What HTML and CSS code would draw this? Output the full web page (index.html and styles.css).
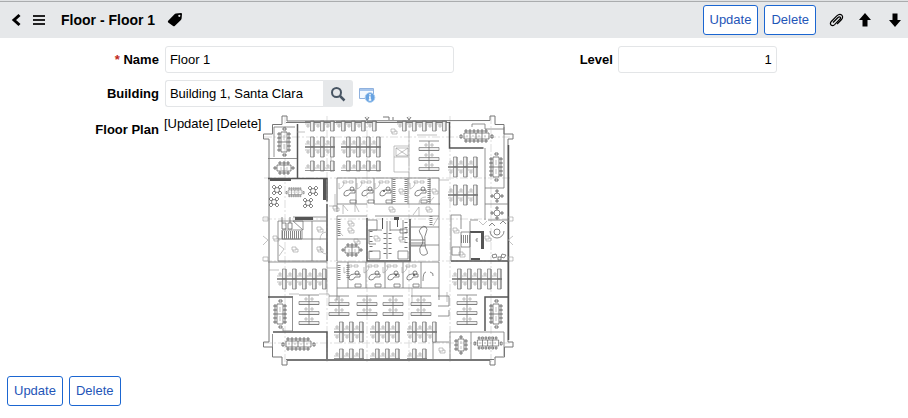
FILE: index.html
```html
<!DOCTYPE html>
<html lang="en">
<head>
<meta charset="utf-8">
<title>Floor - Floor 1</title>
<link rel="stylesheet" href="styles.css">
</head>
<body>
<form class="record">
<header class="toolbar">
  <button type="button" class="icon" aria-label="Back"><svg width="10" height="14" viewBox="0 0 10 14"><path d="M8.500 2 3 7l5.500 5" fill="none" stroke="currentColor" stroke-width="3"/></svg></button>
  <button type="button" class="icon menu" aria-label="Menu"><svg width="12" height="12" viewBox="0 0 12 12"><path d="M0 2h12M0 6h12M0 10h12" stroke="currentColor" stroke-width="2"/></svg></button>
  <h1>Floor - Floor 1</h1>
  <button type="button" class="icon" aria-label="Tag"><svg width="16" height="16" viewBox="0 0 16 16"><path fill="currentColor" fill-rule="evenodd" d="M7.500 2.300q.6-.6 1.500-.7L14 1q1 0 1 1l-.4 4.500q-.1.900-.7 1.500l-6.200 6q-.8.700-1.600 0L1.200 10.500q-.8-.9 0-1.700zM12.300 2.700a1.100 1.100 0 1 0 .01 0z"/></svg></button>
  <div class="actions">
    <button type="button" class="btn">Update</button>
    <button type="button" class="btn">Delete</button>
    <button type="button" class="icon clip" aria-label="Attachments"><svg width="16" height="16" viewBox="0 0 16 16"><path d="m5 10.500 5-5q1.500-1.200 2.200-.3.800 1-.3 2l-5.300 5.400q-2 1.800-3.500.4-1.500-1.600.2-3.500l5.500-5.600q2.800-2.700 5-.8 1.900 2.200-.7 4.900l-4 4" fill="none" stroke="currentColor" stroke-width="1.200"/></svg></button>
    <button type="button" class="icon" aria-label="Previous record"><svg width="14" height="16" viewBox="0 0 14 16"><path fill="currentColor" d="M7 1 1 8h3.500v6.500h5V8H13z"/></svg></button>
    <button type="button" class="icon" aria-label="Next record"><svg width="14" height="16" viewBox="0 0 14 16"><path fill="currentColor" d="M7 15 1 8h3.500V1.500h5V8H13z"/></svg></button>
  </div>
</header>
<main>
  <div class="columns">
    <div class="field"><label for="name"><span class="req">*</span> Name</label><input id="name" type="text" value="Floor 1"></div>
    <div class="field short"><label for="level">Level</label><input id="level" type="text" value="1"></div>
    <div class="field"><label for="building">Building</label>
      <div class="lookup"><input id="building" type="text" value="Building 1, Santa Clara"><button type="button" class="search" aria-label="Look up building"><svg width="16" height="16" viewBox="0 0 16 16"><circle cx="6.500" cy="6.500" r="4.500" fill="none" stroke="currentColor" stroke-width="2"/><path d="m10 10 4.500 4.500" stroke="currentColor" stroke-width="2.500"/></svg></button>
      <button type="button" class="icon info" aria-label="Building details"><svg width="17" height="16" viewBox="0 0 17 16"><path d="M.5 1.500h14v10H.5z" fill="#f4f9ff" stroke="#8fb1de"/><path d="M1 2h13v2H1z" fill="#a8c6ec"/><circle cx="11" cy="10.500" r="4.800" fill="#68a3e2" stroke="#a9ccef"/><path d="M11 7v1.500m-1 1.500h1v3m-1.300 0h2.600" fill="none" stroke="#fff" stroke-width="1.400"/></svg></button></div></div>
  </div>
  <div class="plan-row">
    <span class="plan-label">Floor Plan</span>
    <div class="plan-links"><a href="#update">[Update]</a> <a href="#delete">[Delete]</a></div>
    <svg class="plan" width="254" height="254" viewBox="262 114 254 254" role="img" aria-label="Floor plan">
      <defs>
        <g id="u"><path class="d" d="M5.500 0h3.500v10H5.500z"/><path class="k" d="M0 9.500h10M9 0v10"/><path class="l" d="M0 7h5M2 4h2v2H2z"/></g>
        <g id="u3"><use href="#u"/><use href="#u" x="10"/><use href="#u" x="20"/></g>
        <g id="p3"><use href="#u3"/><use href="#u3" transform="translate(0 20) scale(1 -1)"/></g>
        <g id="p1"><use href="#u"/><use href="#u" transform="translate(0 20) scale(1 -1)"/></g>
        <g id="r"><path class="d" d="M0 6.500h20v3H0z"/><path class="k" d="M0 9.500h20M10 0v10"/><path class="l" d="M6 3h2v2H6zM12 3h2v2h-2z"/></g>
        <g id="r3"><path class="k" d="M0 0h20"/><use href="#r"/><use href="#r" y="10"/><use href="#r" y="20"/></g>
        <g id="r2"><path class="k" d="M0 0h20"/><use href="#r"/><use href="#r" y="10"/></g>
        <g id="v"><path class="c" d="M1 5h2v2H1zM1 9h2v2H1zM1 13h2v2H1zM1 17h2v2H1zM1 21h2v2H1zM11 5h2v2h-2zM11 9h2v2h-2zM11 13h2v2h-2zM11 17h2v2h-2zM11 21h2v2h-2zM6 0h3v2H6zM6 26h3v2H6z"/><path class="t" d="M4 4h6v20H4zM4 14h6"/><path class="l" d="M7 7v5M7 16v5"/></g>
        <g id="h"><path class="c" d="M5 1h2v2H5zM9 1h2v2H9zM13 1h2v2h-2zM17 1h2v2h-2zM21 1h2v2h-2zM25 1h2v2h-2zM5 11h2v2H5zM9 11h2v2H9zM13 11h2v2h-2zM17 11h2v2h-2zM21 11h2v2h-2zM25 11h2v2h-2zM0 6h2v3H0zM31 6h2v3h-2z"/><path class="t" d="M4 4h25v6H4zM10 4v6M16 4v6M22 4v6"/><path class="l" d="M7 6v2M13 6v2M19 6v2M25 6v2"/></g>
        <g id="s"><path class="c" d="M5 0h2v2H5zM9 0h2v2H9zM13 0h2v2h-2zM5 10h2v2H5zM9 10h2v2H9zM13 10h2v2h-2zM0 5h2v2H0zM18 5h2v2h-2z"/><path class="t" d="M3 3h14v6H3zM10 3v6"/><path class="l" d="M7 5v3M13 5v3"/></g>
        <g id="w"><path class="c" d="M0 4h2v2H0zM0 8h2v2H0zM0 12h2v2H0zM10 4h2v2h-2zM10 8h2v2h-2zM10 12h2v2h-2zM5 0h2v2H5zM5 16h2v2H5z"/><path class="t" d="M3 3h6v12H3z"/><path class="l" d="M6 5v3M6 10v3"/></g>
        <g id="q"><circle class="t" r="2.500"/><path class="t" d="m-5-3 2-2 2 2-2 2zM1-3l2-2 2 2-2 2zM-5 3l2-2 2 2-2 2zM1 3l2-2 2 2-2 2z"/></g>
        <g id="q4"><circle class="t" r="3"/><path class="c" d="M-1-6h2v2h-2zM-1 4h2v2h-2zM-6-1h2v2h-2zM4-1h2v2H4z"/></g>
        <g id="o"><path class="l" d="M1 3v6q5-2 5-7M5 1h4v2H5zM11 1h4v2h-4z"/><path class="t" d="M6 13q1-3 5-3h6v3h-5q-1 3-4 3t-2-3z"/><circle class="t" cx="14" cy="9" r="2"/><path class="k" d="M12 20h6v3h-6z"/></g>
        <g id="tag"><path class="l" d="M0 0h4v3H0zM1 3v2h5V2H4"/></g>
      </defs>
      <path class="grid" d="M286 116v248M328 116v248M368 116v248M410 116v248M451 116v248M492 116v248M265 137h248M265 178h248M265 219h248M265 261h248M265 343h248"/>
      <path class="wall" d="M288 121v-5h-5v8.500h-9.500v9.500h-9v5h5.500v203h-5.500v5h9v10h9.500v8h5v-4.500h203v4.500h5v-8h9.500v-10h8.500v-5h-5v-203h5v-5h-9v-9.500h-9v-8.500h-5v4.500zM366 117l2 3 2-3M408 117l2 3 2-3M384 117h6v3M394 117v3"/>
      <path class="heavy" d="M298.500 124v54M269 178.500h59v23M450.500 122v26h34M328 204v57M368 218v43h43v-42M452 261h57M274 332h54v27M486 331v-34h23M269 297h25M509.500 145v195"/>
      <path class="wall" d="M287 122.500h163M287 359.500h208"/>
      <path class="k" d="M269 158.500h29M275 127h21M275 127v30M293.500 297v34M284 331h10M284 328v4M273.500 334v22M451 360v-28h54v24M472 332v28M434 342h16M434 342v17M505 127v61h-19M486 148v72M486 204h23M489 220h20M294 217h34M338 178h102v26M338 204h30M338 178v26M357 178v26M375 178v26M393 178v26M409 178v26M431 178v26M375 204h66M338 216h30M338 216v45M338 239h30M376 216h64M440 204v57M411 227h29M411 245h29M279 221h49M279 221v40h49M313 221v40M279 239h49M452 215h10v14M452 215v46M471 221v40M471 220h8M338 262h102v26H338v-26M349 262v26M367 262v26M386 262v26M404 262v26M422 262v26M338 300v-12M269 262h59M338 212v-8M440 288v12M473 127v-3h13v5h19"/>
      <path class="l" d="M395 146h15v40M395 146v26h15M397 148h12v8h-12zl12 8m0-8-12 8M395 157h15M410 131v15M298 132h8M328 261v33M332 137v35M300 294h-10M320 294h10v12M418 135h20M440 180h10M336 194v12M330 206h8M413 288v15M448 292v10M280 270h-10M328 268h10M344 214v-9l5 6M356 212v-8l4 8M420 216v-9l-6 8M429 204l6-7M480 221l4 4 4-4M264 217h5v4h-5zM264 257h5v4h-5zM509 217h5v4h-5zM509 257h5v4h-5zM264 236l5 4-5 5M514 236l-5 4 5 5M280 245l5 4-5 7M328 232q-7 0-7 8M328 254q-7 0-7-8M440 216l-6 10M338 229l6 7M420 204q0-7 7-7"/>
      <path class="solid" d="M296 217h18v3h-18zM324 179h3v21h-3zM482 231h3v18h-3zM471 231h14v2h-14zM395 217h5v3h-5zM398 218h1v9h-1zM271 179h21v2h-21zM472 258h9v2h-9zM383 218h1v11h-1z"/>
      <path class="stairs" d="M283 235h20M462 239h9"/>
      <path class="hatch" d="M395 179v24M407 179v24M430 179v24M349 265v13M340 219v18M340 265v15M432 216v10"/>
      <path class="k" d="M283 230h20v9h-20zM294 221h10v9l-10-9M462 232h9v15h-9zM453 247h8v8h-8zM369 220h9v10h-9M383 230h-13v14h7M388 221v38M391 221v10M404 220v20M370 251h11v8h-11zM399 251h10v8h-10zM391 230h13M401 229h7v4h-7z"/>
      <path class="fix" d="M372 231v25M386 233v23M391 233v23M407 222v30"/>
      <g transform="translate(0 252) scale(1 -1)"><use href="#u3" x="306" y="121"/><use href="#u3" x="337" y="121"/><use href="#u" x="368" y="121"/><use href="#u3" x="398" y="121"/><use href="#u" x="428" y="121"/><use href="#u" x="438" y="121"/></g>
      <use href="#p3" x="306" y="137"/><use href="#p3" x="342" y="137"/><use href="#p1" x="372" y="137"/>
      <use href="#u3" x="306" y="161"/><use href="#u3" x="342" y="161"/><use href="#u" x="372" y="161"/>
      <use href="#r3" x="420" y="141"/><use href="#p3" x="449" y="157"/><use href="#p3" x="449" y="185"/>
      <use href="#p3" x="278" y="269"/><use href="#p1" x="308" y="269"/><use href="#p1" x="318" y="269"/>
      <use href="#p3" x="453" y="269"/><use href="#p1" x="483" y="269"/><use href="#p1" x="493" y="269"/>
      <use href="#r3" x="300" y="295"/><use href="#r3" x="458" y="295"/>
      <use href="#r2" x="330" y="296"/><use href="#r2" x="358" y="296"/><use href="#r2" x="384" y="296"/><use href="#r2" x="412" y="296"/><path class="k" d="M439 296h11v10h-11M439 316h11v-6"/>
      <use href="#p3" x="335" y="322"/><use href="#p3" x="371" y="322"/><use href="#p3" x="408" y="322"/>
      <use href="#u3" x="335" y="349"/><use href="#u3" x="371" y="349"/><use href="#u" x="408" y="349"/><use href="#u" x="418" y="349"/>
      <use href="#v" x="278" y="128"/><use href="#v" x="490" y="153"/><use href="#v" x="274" y="300"/><use href="#v" x="490" y="300"/>
      <use href="#w" x="456" y="336"/>
      <use href="#h" x="461" y="129"/><use href="#h" x="283" y="337"/><use href="#s" x="275" y="162"/><use href="#s" x="343" y="244"/><use href="#h" transform="translate(475 336) scale(.85 1)"/><use href="#h" transform="translate(287 187) scale(.55 .75)"/>
      <use href="#q" x="278" y="190"/><use href="#q" x="314" y="191"/><use href="#q" x="275" y="202"/><use href="#q" x="309" y="203"/><use href="#q4" x="498" y="196"/><use href="#q4" x="498" y="213"/><circle class="t" cx="498" cy="232" r="3"/><path class="t" d="m493 255 4-1 1 3-4 1zM499 257h3v3h-3zM503 254l4 1-2 3-3-1z"/>
      <path class="t" d="M283 223h4v6h-4zM289 223h4v6h-4zM283 217v6M291 217v6M491 231a7 7 0 0 0 14 0M490 226l3-3 3 3M501 224l3-3 3 3M479 239q-2-1-2 1t2 1"/>
      <use href="#o" x="339" y="180"/><use href="#o" x="357" y="180"/><use href="#o" x="375" y="180"/><use href="#o" x="410" y="180"/>
      <use href="#o" x="344" y="264"/><use href="#o" x="364" y="264"/><use href="#o" x="383" y="264"/><use href="#o" x="402" y="264"/>
      <path class="t" d="M424 240q-1-5-3-7t1-5 5-1 0 6-1 7v4q0 4 2 7t-2 4-5-3 1-6 2-6M412 240h14M412 243h14M412 246h14M424 281q0-9 3-9M431 272q4 1 3 4"/>
      <circle class="dot" cx="385" cy="191" r="1"/><circle class="dot" cx="397" cy="275" r="1"/><circle class="dot" cx="415" cy="275" r="1"/>
      <use href="#tag" x="392" y="129"/><use href="#tag" x="274" y="236"/><use href="#tag" x="293" y="247"/><use href="#tag" x="318" y="247"/><use href="#tag" x="318" y="227"/><use href="#tag" x="349" y="221"/><use href="#tag" x="349" y="228"/><use href="#tag" x="355" y="239"/><use href="#tag" x="400" y="189"/><use href="#tag" x="433" y="189"/><use href="#tag" x="454" y="228"/><use href="#tag" x="440" y="348"/><use href="#tag" x="390" y="207"/><use href="#tag" x="427" y="207"/><use href="#tag" x="334" y="206"/><use href="#tag" x="486" y="236"/><use href="#tag" x="460" y="252"/><use href="#tag" x="375" y="236"/><use href="#tag" x="400" y="237"/>
    </svg>
  </div>
</main>
<footer><button type="button" class="btn">Update</button><button type="button" class="btn">Delete</button></footer>
</form>
</body>
</html>
```

FILE: styles.css
```css
* { box-sizing: border-box; }
body { margin: 0; background: #fff; color: #000; font: 13px/16px "Liberation Sans", Arial, sans-serif; }
button, input { font: inherit; color: inherit; }
.record { margin: 0; border-top: 1px solid #e0e2e4; }
.toolbar { display: flex; align-items: center; height: 37px; padding: 0 6px 0 11px; background: #e6e8ea; border-top: 1px solid #aaacae; }
.icon { display: flex; padding: 0; border: 0; background: none; color: #000; cursor: pointer; }
.menu { margin-left: 12px; color: #222; }
h1 { margin: 0 12px 0 16px; font-size: 14px; line-height: 20px; }
.actions { display: flex; align-items: center; gap: 16px; margin-left: auto; }
.actions .btn + .btn { margin-left: -10px; }
.clip { margin-left: -4px; margin-right: -2px; }
.btn { height: 30px; padding: 0 6px; border: 1px solid #1b66d1; border-radius: 3px; background: #fff; color: #1f56b8; cursor: pointer; }
.columns { display: grid; grid-template-columns: 1fr 1fr; row-gap: 7px; padding-top: 8px; }
.field { display: flex; align-items: center; }
label, .plan-label { flex: none; width: 35%; margin-right: 6px; text-align: right; font-weight: bold; }
.short label { margin-right: 5px; }
.req { color: #c0281c; }
input { flex: 1; min-width: 0; height: 27px; padding: 0 4px; border: 1px solid #e3e5e7; border-radius: 3px; background: #fff; }
.short input { flex: none; width: 35%; text-align: right; }
.lookup { display: flex; align-items: center; flex: 1; }
.lookup input { flex: none; width: 158px; border-radius: 3px 0 0 3px; border-right: 0; }
.search { display: flex; align-items: center; justify-content: center; width: 30px; height: 27px; padding: 0; border: 0; border-radius: 0 3px 3px 0; background: #e6e8ea; color: #485563; }
.info { margin: 2px 0 0 6px; }
.plan-row { display: flex; align-items: flex-start; padding-top: 7px; }
.plan-label { width: 17.5%; margin-right: 5px; padding-top: 8px; }
.plan-links { padding-top: 2px; white-space: nowrap; }
.plan-links a { color: #000; text-decoration: none; }
.plan { flex: none; display: block; }
.plan path, .plan circle { fill: none; stroke-width: 1; }
.plan .grid { stroke: #ddd; stroke-dasharray: 8 2 2 2; }
.plan .wall { stroke: #777; }
.plan .heavy { stroke: #555; stroke-width: 1.5; }
.plan .k { stroke: #777; stroke-width: .8; }
.plan .l { stroke: #999; stroke-width: .6; }
.plan .d { fill: #eee; stroke: #777; stroke-width: .7; }
.plan .t { stroke: #555; stroke-width: .7; }
.plan .c { stroke: #444; stroke-width: .7; }
.plan .solid, .plan .dot { fill: #555; }
.plan .stairs { stroke: #888; stroke-width: 8; stroke-dasharray: 1 1; }
.plan .hatch { stroke: #888; stroke-width: 3; stroke-dasharray: 1 1; }
.plan .fix { stroke: #777; stroke-width: 3; stroke-dasharray: 1 4; }
footer { display: flex; gap: 6px; padding: 8px 7px; }
```
